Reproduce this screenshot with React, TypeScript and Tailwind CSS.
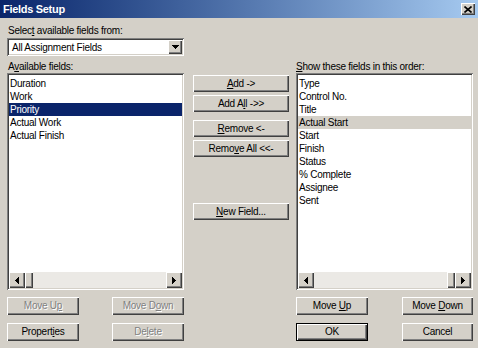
import React from "react";

const raised =
  "bg-[#d4d0c8] shadow-[inset_1px_1px_#ffffff,inset_-1px_-1px_#404040,inset_-2px_-2px_#808080]";
const sunken =
  "bg-white shadow-[inset_1px_1px_#808080,inset_-1px_-1px_#ffffff,inset_2px_2px_#404040,inset_-2px_-2px_#d4d0c8]";

interface BtnProps {
  children: React.ReactNode;
  className?: string;
  disabled?: boolean;
  isDefault?: boolean;
}

function Btn({ children, className = "", disabled = false, isDefault = false }: BtnProps) {
  return (
    <button
      type="button"
      className={`flex items-center justify-center leading-none ${raised} ${
        disabled ? "text-[#808080] [text-shadow:1px_1px_0_#ffffff]" : "text-black"
      } ${isDefault ? "border border-black" : ""} ${className}`}
    >
      <span>{children}</span>
    </button>
  );
}

function Arrow({ dir }: { dir: "left" | "right" | "down" }) {
  if (dir === "down") {
    return (
      <svg width="7" height="4" viewBox="0 0 7 4" shapeRendering="crispEdges">
        <polygon points="0,0 7,0 3.5,4" fill="#000" />
      </svg>
    );
  }
  return (
    <svg width="4" height="7" viewBox="0 0 4 7" shapeRendering="crispEdges">
      {dir === "left" ? (
        <polygon points="4,0 0,3.5 4,7" fill="#000" />
      ) : (
        <polygon points="0,0 4,3.5 0,7" fill="#000" />
      )}
    </svg>
  );
}

function ScrollBar({ thumbAtEnd = false }: { thumbAtEnd?: boolean }) {
  return (
    <div className="h-[16px] flex bg-[#ebe9e5]">
      <div className={`w-[16px] h-[16px] flex items-center justify-center ${raised}`}>
        <Arrow dir="left" />
      </div>
      {!thumbAtEnd && <div className={`w-[8px] h-[16px] ${raised}`} />}
      <div className="flex-1" />
      {thumbAtEnd && <div className={`w-[8px] h-[16px] ${raised}`} />}
      <div className={`w-[16px] h-[16px] flex items-center justify-center ${raised}`}>
        <Arrow dir="right" />
      </div>
    </div>
  );
}

interface ListProps {
  items: string[];
  selected: number;
  active: boolean;
  thumbAtEnd?: boolean;
}

function ListBox({ items, selected, active, thumbAtEnd }: ListProps) {
  return (
    <div className={`h-[217px] p-[2px] flex flex-col ${sunken}`}>
      <div className="flex-1 pt-[2px]">
        {items.map((item, i) => (
          <div
            key={item}
            className={`h-[13px] leading-[13px] pl-[1px] ${
              i === selected
                ? active
                  ? "bg-[#0a246a] text-white"
                  : "bg-[#d4d0c8] text-black"
                : "text-black"
            }`}
          >
            {item}
          </div>
        ))}
      </div>
      <ScrollBar thumbAtEnd={thumbAtEnd} />
    </div>
  );
}

export default function App() {
  const available = ["Duration", "Work", "Priority", "Actual Work", "Actual Finish"];
  const shown = [
    "Type",
    "Control No.",
    "Title",
    "Actual Start",
    "Start",
    "Finish",
    "Status",
    "% Complete",
    "Assignee",
    "Sent",
  ];

  return (
    <div className="w-[478px] h-[348px] bg-[#d4d0c8] overflow-hidden font-['Liberation_Sans',Arial,sans-serif] text-[10px] tracking-[-0.25px] text-black select-none">
      {/* title bar */}
      <div className="h-[18px] flex items-center pl-[3px] bg-gradient-to-r from-[#0a246a] to-[#a6caf0]">
        <span className="flex-1 text-white font-bold text-[11px] tracking-[-0.3px]">Fields Setup</span>
        <button type="button" className={`w-[14px] h-[12px] mr-[3px] flex items-center justify-center ${raised}`}>
          <svg width="8" height="7" viewBox="0 0 8 7">
            <path d="M0.5 0.5 L7.5 6.5 M7.5 0.5 L0.5 6.5" stroke="#000" strokeWidth="1.6" fill="none" />
          </svg>
        </button>
      </div>

      <div className="flex pl-[7px]">
        {/* left column */}
        <div className="w-[177px] flex flex-col">
          <div className="mt-[6px] h-[13px] leading-[13px] pl-[1px]">
            Selec<u>t</u> available fields from:
          </div>
          <div className={`mt-[1px] h-[18px] flex items-center p-[2px] ${sunken}`}>
            <span className="flex-1 pl-[3px]">All Assignment Fields</span>
            <div className={`w-[14px] h-[14px] flex items-center justify-center ${raised}`}>
              <Arrow dir="down" />
            </div>
          </div>
          <div className="mt-[4px] h-[13px] leading-[13px] pl-[1px]">
            A<u>v</u>ailable fields:
          </div>
          <ListBox items={available} selected={2} active />
          <div className="mt-[7px] flex justify-between">
            <Btn disabled className="w-[72px] h-[18px]">
              Move U<u>p</u>
            </Btn>
            <Btn disabled className="w-[72px] h-[18px]">
              Move D<u>o</u>wn
            </Btn>
          </div>
          <div className="mt-[8px] flex justify-between">
            <Btn className="w-[72px] h-[18px]">
              Propert<u>i</u>es
            </Btn>
            <Btn disabled className="w-[72px] h-[18px]">
              De<u>l</u>ete
            </Btn>
          </div>
        </div>

        {/* middle column */}
        <div className="w-[96px] ml-[9px] flex flex-col">
          <Btn className="mt-[57px] h-[17px]">
            <u>A</u>dd -&gt;
          </Btn>
          <Btn className="mt-[3px] h-[17px]">
            Add A<u>l</u>l -&gt;&gt;
          </Btn>
          <Btn className="mt-[8px] h-[17px]">
            <u>R</u>emove &lt;-
          </Btn>
          <Btn className="mt-[3px] h-[17px]">
            Remo<u>v</u>e All &lt;&lt;-
          </Btn>
          <Btn className="mt-[46px] h-[17px]">
            <u>N</u>ew Field...
          </Btn>
        </div>

        {/* right column */}
        <div className="w-[177px] ml-[7px] flex flex-col">
          <div className="mt-[42px] h-[13px] leading-[13px]">
            <u>S</u>how these fields in this order:
          </div>
          <ListBox items={shown} selected={3} active={false} thumbAtEnd />
          <div className="mt-[7px] flex justify-between">
            <Btn className="w-[72px] h-[18px]">
              Move <u>U</u>p
            </Btn>
            <Btn className="w-[71px] h-[18px]">
              Move <u>D</u>own
            </Btn>
          </div>
          <div className="mt-[8px] flex justify-between">
            <Btn isDefault className="w-[72px] h-[18px]">
              OK
            </Btn>
            <Btn className="w-[71px] h-[18px]">Cancel</Btn>
          </div>
        </div>
      </div>
    </div>
  );
}
